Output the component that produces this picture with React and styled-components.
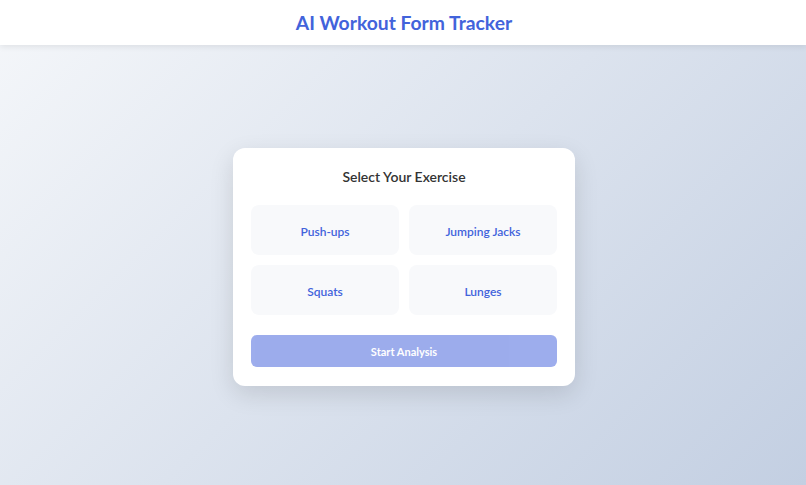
import React, { useState } from "react";
import styled, { createGlobalStyle } from "styled-components";

const Global = createGlobalStyle`
  * { box-sizing: border-box; }
  html, body { margin: 0; padding: 0; height: 100%; }
  body {
    font-family: Lato, "Noto Sans", sans-serif;
    background: linear-gradient(135deg, #f5f7fa 0%, #c3cfe2 100%);
    min-height: 100vh;
  }
  #root { min-height: 100vh; display: flex; flex-direction: column; }
`;

const Header = styled.header`
  height: 45px;
  background: #fff;
  box-shadow: 0 2px 6px rgba(0, 0, 0, 0.08);
  display: flex;
  align-items: center;
  justify-content: center;
`;

const Title = styled.h1`
  margin: 0 0 0 2px;
  font-size: 19.3px;
  font-weight: 700;
  color: #4263db;
`;

const Main = styled.main`
  flex: 1;
  display: flex;
  justify-content: center;
  padding: 103px 0 0 2px;
`;

const Card = styled.section`
  width: 342px;
  height: 238px;
  background: #fff;
  border-radius: 12px;
  box-shadow: 0 8px 24px rgba(0, 0, 0, 0.12);
  padding: 18px;
  display: flex;
  flex-direction: column;
`;

const CardTitle = styled.h2`
  margin: 1px 0 0;
  text-align: center;
  font-size: 14px;
  font-weight: 600;
  color: #333;
  line-height: 20px;
`;

const Grid = styled.div`
  margin-top: 18px;
  display: grid;
  grid-template-columns: 1fr 1fr;
  gap: 10px;
`;

const Option = styled.button`
  height: 50px;
  padding: 3px 0 0;
  border: none;
  border-radius: 8px;
  background: ${(p) => (p.$active ? "#e7ecfd" : "#f8f9fb")};
  color: #4263db;
  font-family: inherit;
  font-size: 12px;
  font-weight: 600;
  cursor: pointer;
`;

const Start = styled.button`
  margin-top: 20px;
  height: 32px;
  border: none;
  border-radius: 6px;
  background: #3b5bdb;
  opacity: ${(p) => (p.disabled ? 0.5 : 1)};
  color: #fff;
  font-family: inherit;
  font-size: 11px;
  font-weight: 700;
`;

const exercises = ["Push-ups", "Jumping Jacks", "Squats", "Lunges"];

export default function App() {
  const [sel, setSel] = useState(null);
  return (
    <>
      <Global />
      <Header>
        <Title>AI Workout Form Tracker</Title>
      </Header>
      <Main>
        <Card>
          <CardTitle>Select Your Exercise</CardTitle>
          <Grid>
            {exercises.map((e) => (
              <Option key={e} $active={sel === e} onClick={() => setSel(e)}>
                {e}
              </Option>
            ))}
          </Grid>
          <Start disabled={!sel}>Start Analysis</Start>
        </Card>
      </Main>
    </>
  );
}
